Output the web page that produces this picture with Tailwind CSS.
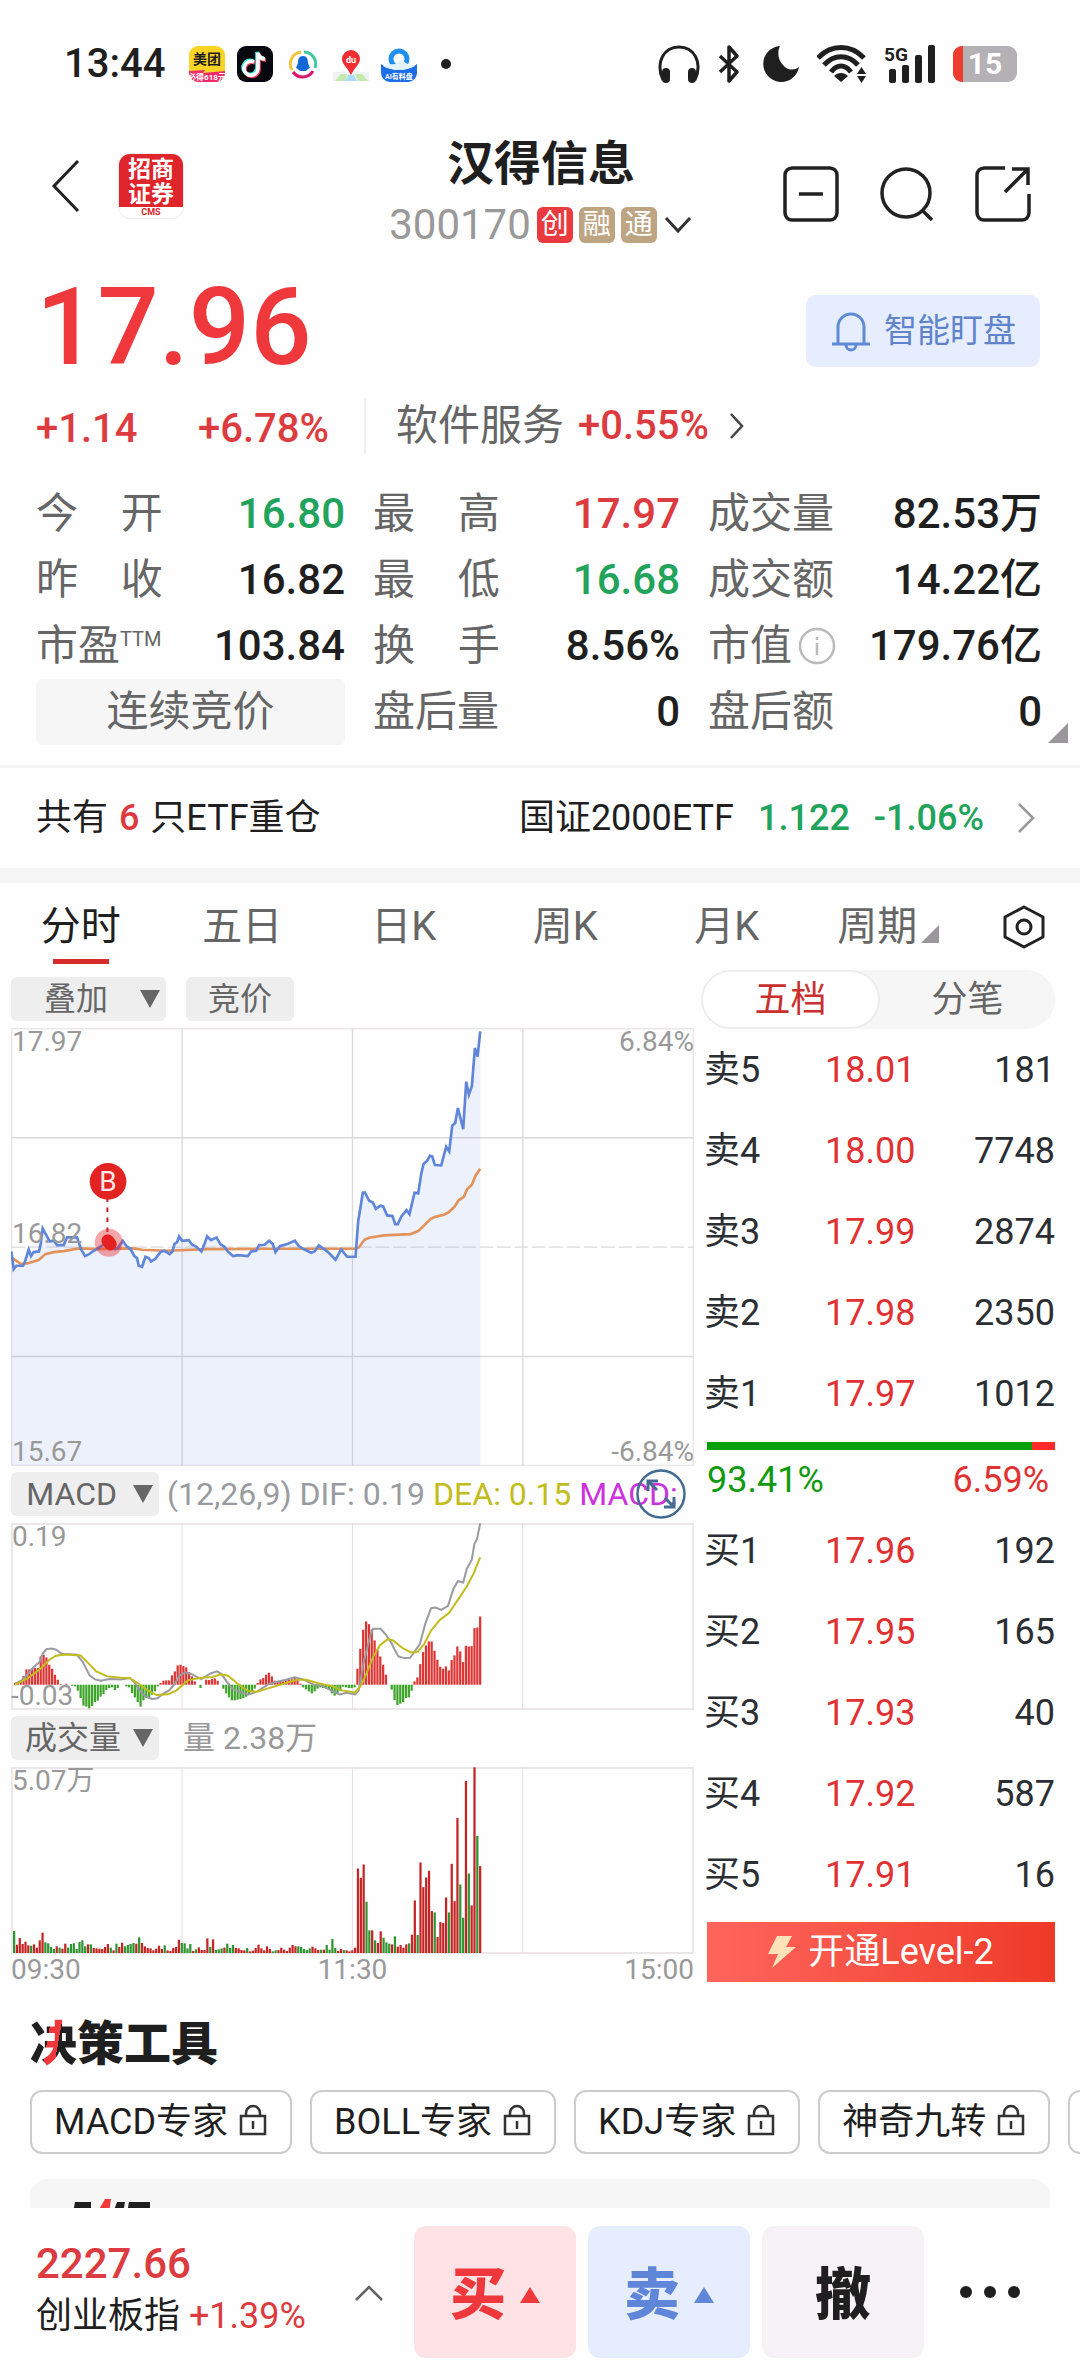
<!DOCTYPE html>
<html lang="zh-CN">
<head>
    <meta charset="UTF-8">
    <meta name="viewport" content="width=device-width, initial-scale=1.0">
    <title>汉得信息 300170</title>
    <script src="https://cdn.jsdelivr.net/npm/@tailwindcss/browser@4"></script>
    <style>
        body {
            font-family: Roboto, 'Noto Sans CJK SC', sans-serif;
        }
    </style>
</head>
<body class="bg-[#fefefe] text-[#1f1f1f]">
    <div class="flex h-screen flex-col overflow-hidden">
        <main class="min-h-0 flex-1 overflow-hidden">
            <!-- Status bar -->
            <div class="flex h-[128px] items-center justify-between pl-[64px] pr-[63px]">
                <div class="flex items-center gap-[12px]">
                    <span class="mr-[12px] text-[40px] font-medium leading-[44px]">13:44</span>
                    <svg class="size-[36px]" viewBox="0 0 36 36">
                        <rect width="36" height="36" rx="9" fill="#fbd324"/>
                        <path d="M0 25 L16 24 L14 27 L36 25 V27 A9 9 0 0 1 27 36 H9 A9 9 0 0 1 0 27Z" fill="#ee2c6c"/>
                        <text x="18" y="18" text-anchor="middle" font-size="14" font-weight="700" fill="#1f1f1f">美团</text>
                        <text x="18" y="34" text-anchor="middle" font-size="8" font-weight="700" fill="#fff">必得618元</text>
                    </svg>
                    <svg class="size-[36px]" viewBox="0 0 36 36">
                        <rect width="36" height="36" rx="9" fill="#06070f"/>
                        <g fill="none" stroke-width="3.6">
                            <path d="M18 15 a7 7 0 1 0 4 6 V6 c1 4 3 6 7 6" transform="translate(-2 0)" stroke="#37e6e0"/>
                            <path d="M18 15 a7 7 0 1 0 4 6 V6 c1 4 3 6 7 6" transform="translate(0 2)" stroke="#f0385c"/>
                            <path d="M18 15 a7 7 0 1 0 4 6 V6 c1 4 3 6 7 6" transform="translate(-1 1)" stroke="#fff"/>
                        </g>
                    </svg>
                    <svg class="size-[36px]" viewBox="0 0 36 36">
                        <g fill="none" stroke-width="3">
                            <path d="M7 24 A12 12 0 0 1 16 6" stroke="#f5c53c"/>
                            <path d="M19 6 A12 12 0 0 1 30 22" stroke="#3cc8a0"/>
                            <path d="M28 25 A12 12 0 0 1 8 26" stroke="#d8186c"/>
                        </g>
                        <path d="M18 10 c4 0 5 3 5 7 l2 5 -2 1 -2 2 h-6 l-2-2 -2-1 2-5 c0-4 1-7 5-7z" fill="#1568d8"/>
                    </svg>
                    <svg class="size-[36px]" viewBox="0 0 36 36">
                        <path d="M0 26 H36 V35 H0Z" fill="#eef3f2"/>
                        <path d="M2 35 L8 28 H14 L12 35Z M22 28 H29 L35 35 H25Z" fill="#c5e8ad"/>
                        <path d="M12 35 L15 29 H21 L24 35Z" fill="#a8dcf7"/>
                        <path d="M18 29 C14 21 9 18 9 13 A9 9 0 0 1 27 13 C27 18 22 21 18 29Z" fill="#ee2e33"/>
                        <text x="18" y="17" text-anchor="middle" font-size="9" font-weight="700" fill="#fff">du</text>
                    </svg>
                    <svg class="size-[36px]" viewBox="0 0 36 36">
                        <path d="M0 18 C10 26 26 26 36 18 V27 A9 9 0 0 1 27 36 H9 A9 9 0 0 1 0 27Z" fill="#1c6de8"/>
                        <circle cx="18" cy="13" r="8" fill="none" stroke="#218ff2" stroke-width="5"/>
                        <path d="M2 20 C10 16 15 21 19 14 C24 15 25 19 34 20 C25 25 10 25 2 20Z" fill="#e3f3ff"/>
                        <text x="18" y="33" text-anchor="middle" font-size="7" font-weight="700" fill="#fff">AI有料盘</text>
                    </svg>
                    <span class="ml-[12px] size-[10px] rounded-full bg-[#1f1f1f]"></span>
                </div>
                <div class="flex items-center gap-[17px]">
                    <svg class="h-[40px] w-[42px]" viewBox="0 0 42 40">
                        <path d="M5 36 C-3 18 6 3 21 3 C36 3 45 18 37 36" fill="none" stroke="#1f1f1f" stroke-width="3"/>
                        <rect x="4" y="24" width="8" height="15" rx="4" fill="#1f1f1f"/>
                        <rect x="30" y="24" width="8" height="15" rx="4" fill="#1f1f1f"/>
                    </svg>
                    <svg class="h-[40px] w-[24px]" viewBox="0 0 24 40">
                        <path d="M3 12 L20 28 L12 37 V3 L20 12 L3 28" fill="none" stroke="#1f1f1f" stroke-width="3.5" stroke-linejoin="round"/>
                    </svg>
                    <svg class="ml-[4px] h-[38px] w-[38px]" viewBox="0 0 38 38">
                        <path d="M18 1 A18 18 0 1 0 37 22 A11 11 0 0 1 21 20 C16 15 15 7 18 1Z" fill="#1f1f1f"/>
                    </svg>
                    <svg class="h-[38px] w-[50px]" viewBox="0 0 50 38">
                        <g fill="none" stroke="#1f1f1f" stroke-width="5">
                            <path d="M1 13 C14 -1 34 -1 47 13"/>
                            <path d="M7 20 C17 9 31 9 41 20"/>
                            <path d="M14 27 C20 19 28 19 34 27"/>
                        </g>
                        <path d="M17 31 C21 27 27 27 31 31 L24 37Z" fill="#1f1f1f"/>
                        <path d="M40 29 L44.500 22 L49 29Z M40 31 L44.500 38 L49 31Z" fill="#1f1f1f"/>
                    </svg>
                    <svg class="h-[44px] w-[52px] overflow-visible" viewBox="0 -4 52 44">
                        <text x="0" y="15" font-size="19" font-weight="700" fill="#1f1f1f">5G</text>
                        <g fill="#1f1f1f">
                            <rect x="5" y="23" width="7" height="14" rx="2"/>
                            <rect x="18" y="19" width="7" height="18" rx="2"/>
                            <rect x="31" y="9" width="7" height="28" rx="2"/>
                            <rect x="44" y="-1" width="7" height="38" rx="2"/>
                        </g>
                    </svg>
                    <div class="relative flex h-[36px] w-[64px] items-center justify-center overflow-hidden rounded-[9px] bg-[#b3b1b3] text-[30px] font-bold leading-[36px] text-white">
                        <span class="absolute inset-y-0 left-0 w-[10px] bg-[#ee3c2e]"></span>
                        15
                    </div>
                </div>
            </div>

            <!-- Header -->
            <header class="grid h-[132px] grid-cols-[1fr_auto_1fr] items-center pl-[50px] pr-[48px]">
                <div class="flex items-center gap-[36px] pb-[16px]">
                    <button type="button" aria-label="返回">
                        <svg class="h-[54px] w-[32px]" viewBox="0 0 32 54"><path d="M28 2 L4 27 L28 52" fill="none" stroke="#222" stroke-width="3"/></svg>
                    </button>
                    <div class="flex h-[66px] w-[66px] flex-col overflow-hidden rounded-[12px] border border-[#eee] bg-white text-center">
                        <span class="bg-[#e0242b] pt-[3px] text-[23px] font-bold leading-[25px] text-white">招商<br>证券</span>
                        <span class="text-[9px] font-bold leading-[11px] text-[#d8232a]">CMS</span>
                    </div>
                </div>
                <div class="flex flex-col items-center">
                    <h1 class="text-[47px] font-bold leading-[62px]">汉得信息</h1>
                    <div class="flex items-center gap-[6px]">
                        <span class="text-[42px] leading-[60px] text-[#999]">300170</span>
                        <span class="size-[36px] rounded-[6px] bg-[#e83a3f] text-center text-[28px] leading-[36px] text-white">创</span>
                        <span class="size-[36px] rounded-[6px] bg-[#bda583] text-center text-[28px] leading-[36px] text-white">融</span>
                        <span class="size-[36px] rounded-[6px] bg-[#bda583] text-center text-[28px] leading-[36px] text-white">通</span>
                        <svg class="h-[18px] w-[30px]" viewBox="0 0 30 18"><path d="M3 2 L15 15 L27 2" fill="none" stroke="#333" stroke-width="3"/></svg>
                    </div>
                </div>
                <div class="flex items-center justify-end gap-[38px]">
                    <button type="button" aria-label="删自选">
                        <svg class="size-[58px]" viewBox="0 0 58 58">
                            <rect x="3" y="3" width="52" height="52" rx="7" fill="none" stroke="#222" stroke-width="3.500"/>
                            <path d="M17 29 H41" stroke="#222" stroke-width="3.500"/>
                        </svg>
                    </button>
                    <button type="button" aria-label="搜索">
                        <svg class="size-[58px]" viewBox="0 0 58 58">
                            <circle cx="28" cy="28" r="24" fill="none" stroke="#222" stroke-width="3.500"/>
                            <path d="M44 45 L54 55" stroke="#222" stroke-width="3.500"/>
                        </svg>
                    </button>
                    <button type="button" aria-label="分享">
                        <svg class="size-[58px]" viewBox="0 0 58 58">
                            <path d="M31 3 H10 A7 7 0 0 0 3 10 V48 A7 7 0 0 0 10 55 H48 A7 7 0 0 0 55 48 V29 M31 27 L54 4 M38 4 H54 V20" fill="none" stroke="#222" stroke-width="3.500"/>
                        </svg>
                    </button>
                </div>
            </header>

            <!-- Price -->
            <section>
                <div class="flex h-[134px] items-center justify-between pl-[36px] pr-[40px]">
                    <span class="text-[108px] font-medium leading-[120px] text-[#ef383c]">17.96</span>
                    <button type="button" class="mt-[8px] flex h-[72px] items-center gap-[12px] rounded-[10px] bg-[#e6edff] px-[24px] text-[33px] text-[#5f84cc]">
                        <svg class="h-[42px] w-[42px]" viewBox="0 0 42 42">
                            <path d="M8 34 V17 A13 13 0 0 1 34 17 V34 M2 34 H40 M16 35 A5 5 0 0 0 26 35" fill="none" stroke="#5f8ad6" stroke-width="3"/>
                        </svg>
                        智能盯盘
                    </button>
                </div>
                <div class="flex h-[64px] items-center px-[36px] text-[40px] font-medium leading-[56px] text-[#dc3b40]">
                    <span class="w-[162px] pt-[6px]">+1.14</span>
                    <span class="w-[166px] pt-[6px]">+6.78%</span>
                    <a href="#" class="flex items-center border-l-2 border-[#f2f2f2] pl-[30px]">
                        <span class="mr-[14px] text-[42px] font-normal text-[#666]">软件服务</span>
                        <span>+0.55%</span>
                        <svg class="ml-[20px] h-[28px] w-[16px]" viewBox="0 0 16 28"><path d="M2 2 L13 14 L2 26" fill="none" stroke="#444" stroke-width="2.500"/></svg>
                    </a>
                </div>
            </section>

            <!-- Quote details -->
            <section class="relative mt-[23px] grid grid-cols-[309fr_307fr_334fr] gap-x-[28px] pl-[36px] pr-[38px] text-[42px] leading-[66px]">
                <div class="flex justify-between"><span class="text-[#666]">今&emsp;开</span><span class="font-medium text-[#21a35c]">16.80</span></div>
                <div class="flex justify-between"><span class="text-[#666]">最&emsp;高</span><span class="font-medium text-[#dc3b40]">17.97</span></div>
                <div class="flex justify-between"><span class="text-[#666]">成交量</span><span class="font-medium">82.53万</span></div>
                <div class="flex justify-between"><span class="text-[#666]">昨&emsp;收</span><span class="font-medium">16.82</span></div>
                <div class="flex justify-between"><span class="text-[#666]">最&emsp;低</span><span class="font-medium text-[#21a35c]">16.68</span></div>
                <div class="flex justify-between"><span class="text-[#666]">成交额</span><span class="font-medium">14.22亿</span></div>
                <div class="flex justify-between"><span class="flex text-[#666]">市盈<span class="text-[20px] leading-[52px]">TTM</span></span><span class="font-medium">103.84</span></div>
                <div class="flex justify-between"><span class="text-[#666]">换&emsp;手</span><span class="font-medium">8.56%</span></div>
                <div class="flex justify-between">
                    <span class="flex items-center gap-[6px] text-[#666]">市值
                        <svg class="size-[38px]" viewBox="0 0 38 38">
                            <circle cx="19" cy="19" r="17" fill="none" stroke="#bbb" stroke-width="2.500"/>
                            <path d="M19 16 V28 M19 10 V13" stroke="#bbb" stroke-width="2.500"/>
                        </svg>
                    </span>
                    <span class="font-medium">179.76亿</span>
                </div>
                <div class="rounded-[6px] bg-[#f6f6f6] text-center text-[#666]">连续竞价</div>
                <div class="flex justify-between"><span class="text-[#666]">盘后量</span><span class="font-medium">0</span></div>
                <div class="flex justify-between"><span class="text-[#666]">盘后额</span><span class="font-medium">0</span></div>
                <svg class="absolute bottom-[2px] right-[12px] size-[20px]" viewBox="0 0 20 20"><path d="M20 0 V20 H0Z" fill="#9a979b"/></svg>
            </section>

            <!-- ETF -->
            <a href="#" class="mt-[20px] flex h-[118px] items-center border-b-[15px] border-t-[3px] border-[#f6f6f6] pl-[36px] pr-[44px] text-[36px]">
                <span>共有 <span class="mx-[2px] font-medium text-[#dc3b40]">6</span> 只ETF重仓</span>
                <span class="ml-auto">国证2000ETF</span>
                <span class="ml-[24px] font-medium text-[#21a35c]">1.122</span>
                <span class="ml-[24px] font-medium text-[#21a35c]">-1.06%</span>
                <svg class="ml-[32px] h-[32px] w-[20px]" viewBox="0 0 20 32"><path d="M3 2 L17 16 L3 30" fill="none" stroke="#999" stroke-width="2.500"/></svg>
            </a>

            <!-- Period tabs -->
            <nav class="flex h-[87px] items-center pr-[33px] text-[40px] leading-[56px] text-[#666]">
                <a href="#" class="relative flex-1 text-center text-[#1f1f1f]">分时<span class="absolute -bottom-[9px] left-1/2 h-[5px] w-[56px] -translate-x-1/2 bg-[#d62b2b]"></span></a>
                <a href="#" class="flex-1 text-center">五日</a>
                <a href="#" class="flex-1 text-center">日K</a>
                <a href="#" class="flex-1 text-center">周K</a>
                <a href="#" class="flex-1 text-center">月K</a>
                <a href="#" class="flex flex-1 items-center justify-center gap-[4px]">周期<svg class="mt-[14px] size-[18px]" viewBox="0 0 18 18"><path d="M18 0 V18 H0Z" fill="#9a979b"/></svg></a>
                <button type="button" aria-label="设置" class="ml-[32px]">
                    <svg class="size-[46px]" viewBox="0 0 46 46">
                        <path d="M23 3 L42 13 V33 L23 43 L4 33 V13Z" fill="none" stroke="#222" stroke-width="3" stroke-linejoin="round"/>
                        <circle cx="23" cy="23" r="7" fill="none" stroke="#222" stroke-width="3"/>
                    </svg>
                </button>
            </nav>

            <section class="flex">
                <!-- Charts -->
                <div class="min-w-0 flex-1 pl-[11px] pt-[7px] text-[32px] leading-[44px]">
                    <div class="flex gap-[20px] text-[#666]">
                        <button type="button" class="flex h-[44px] w-[155px] items-center justify-end gap-[32px] rounded-[6px] bg-[#eee] pr-[6px]">叠加
                            <svg class="h-[18px] w-[20px]" viewBox="0 0 20 18"><path d="M0 0 H20 L10 18Z" fill="#666"/></svg>
                        </button>
                        <button type="button" class="h-[44px] rounded-[6px] bg-[#eee] px-[22px]">竞价</button>
                    </div>

                    <div class="relative mt-[7px] text-[28px] leading-[28px] text-[#999]">
                        <svg class="block w-full" viewBox="32 52 2048 1314">
                            <g fill="none" stroke="#dcdadc" stroke-width="4">
                                <rect x="34" y="54" width="2044" height="1310" stroke="#ebe7e9" stroke-width="5"/>
                                <path d="M545 54 V1364 M1056 54 V1364 M1567 54 V1364 M34 381 H2078 M34 1037 H2078"/>
                                <path d="M34 709 H2078" stroke-dasharray="40 12"/>
                            </g>
                            <polygon id="price-area" fill="#6488f0" fill-opacity="0.11"/>
                            <polyline id="avg-line" fill="none" stroke="#e1935b" stroke-width="8"/>
                            <polyline id="price-line" fill="none" stroke="#5f86d8" stroke-width="8"/>
                            <!-- Buy marker -->
                            <path d="M321 560 V670" stroke="#c2242a" stroke-width="6" stroke-dasharray="14 16"/>
                            <circle cx="325" cy="696" r="42" fill="#e8242a" fill-opacity="0.4"/>
                            <path d="M322 690 L330 700" stroke="#e52020" stroke-width="38" stroke-linecap="round"/>
                            <circle cx="323" cy="512" r="55" fill="#e32222"/>
                            <text x="323" y="542" text-anchor="middle" font-size="84" fill="#ffe8e8">B</text>
                        </svg>
                        <span class="absolute left-[1px] top-0">17.97</span>
                        <span class="absolute right-0 top-0">6.84%</span>
                        <span class="absolute left-[1px] top-[192px]">16.82</span>
                        <span class="absolute bottom-0 left-[1px]">15.67</span>
                        <span class="absolute bottom-0 right-0">-6.84%</span>
                    </div>

                    <div class="relative mt-[6px] flex items-center gap-[8px] whitespace-nowrap text-[#999ba0]">
                        <button type="button" class="flex h-[44px] w-[148px] items-center justify-end gap-[16px] rounded-[6px] bg-[#eee] pr-[6px] text-[#666]">MACD
                            <svg class="h-[18px] w-[20px]" viewBox="0 0 20 18"><path d="M0 0 H20 L10 18Z" fill="#666"/></svg>
                        </button>
                        <span>(12,26,9)</span>
                        <span>DIF: 0.19</span>
                        <span class="text-[#c2bc1c]">DEA: 0.15</span>
                        <span class="text-[#cc33dd]">MACD:</span>
                        <button type="button" aria-label="全屏" class="absolute right-[8px] -top-[3px] size-[50px]">
                            <svg class="size-[50px]" viewBox="0 0 50 50">
                                <circle cx="25" cy="25" r="23.500" fill="none" stroke="#446c92" stroke-width="2.500"/>
                                <path d="M21 21 L12 12 M12 22 V12 H22 M29 29 L38 38 M38 28 V38 H28" fill="none" stroke="#446c92" stroke-width="3"/>
                            </svg>
                        </button>
                    </div>

                    <div class="relative mt-[7px] text-[28px] leading-[28px] text-[#999]">
                        <svg class="block h-[187px] w-full" viewBox="24 187 1530 562" preserveAspectRatio="none">
                            <g fill="none" stroke="#ebe7e9" stroke-width="2">
                                <rect x="26" y="190" width="1526" height="556" vector-effect="non-scaling-stroke"/>
                                <path d="M407 188 V746 M789 188 V746 M1170 188 V746" stroke="#dcdadc"/>
                            </g>
                            <g id="macd-bars"></g>
                            <polyline id="dif-line" fill="none" stroke="#999ba0" stroke-width="2" vector-effect="non-scaling-stroke"/>
                            <polyline id="dea-line" fill="none" stroke="#c2bc1c" stroke-width="2" vector-effect="non-scaling-stroke"/>
                        </svg>
                        <span class="absolute left-[1px] top-0">0.19</span>
                        <span class="absolute bottom-0 left-0">-0.03</span>
                    </div>

                    <div class="mt-[6px] flex items-center gap-[24px] text-[#999]">
                        <button type="button" class="flex h-[44px] w-[148px] items-center justify-end gap-[12px] rounded-[6px] bg-[#eee] pr-[6px] text-[#666]">成交量
                            <svg class="h-[18px] w-[20px]" viewBox="0 0 20 18"><path d="M0 0 H20 L10 18Z" fill="#666"/></svg>
                        </button>
                        <span>量 2.38万</span>
                    </div>

                    <div class="relative mt-[7px] text-[28px] leading-[28px] text-[#999]">
                        <svg class="block h-[187px] w-full" viewBox="24 139 1530 562" preserveAspectRatio="none">
                            <g fill="none" stroke="#ebe7e9" stroke-width="2">
                                <rect x="26" y="142" width="1526" height="556" vector-effect="non-scaling-stroke"/>
                                <path d="M407 140 V698 M789 140 V698 M1170 140 V698" stroke="#dcdadc"/>
                            </g>
                            <g id="volume-bars"></g>
                        </svg>
                        <span class="absolute left-[1px] top-0">5.07万</span>
                    </div>
                    <div class="grid grid-cols-3 text-[28px] leading-[32px] text-[#999]">
                        <span>09:30</span>
                        <span class="text-center">11:30</span>
                        <span class="text-right">15:00</span>
                    </div>
                </div>

                <!-- Order book -->
                <div class="w-[386px] shrink-0 pl-[7px] pr-[25px] text-[36px] text-[#2b2f33]">
                    <div class="flex h-[59px] rounded-full bg-[#f6f6f6] text-[#666]">
                        <button type="button" class="flex-1 rounded-full border-2 border-[#efecec] bg-white text-[#c9302f]">五档</button>
                        <button type="button" class="flex-1">分笔</button>
                    </div>
                    <table class="w-full">
                        <tbody>
                            <tr class="h-[81px]"><th class="w-[124px] pl-[3px] text-left font-normal">卖5</th><td class="text-[#e03232]">18.01</td><td class="text-right">181</td></tr>
                            <tr class="h-[81px]"><th class="pl-[3px] text-left font-normal">卖4</th><td class="text-[#e03232]">18.00</td><td class="text-right">7748</td></tr>
                            <tr class="h-[81px]"><th class="pl-[3px] text-left font-normal">卖3</th><td class="text-[#e03232]">17.99</td><td class="text-right">2874</td></tr>
                            <tr class="h-[81px]"><th class="pl-[3px] text-left font-normal">卖2</th><td class="text-[#e03232]">17.98</td><td class="text-right">2350</td></tr>
                            <tr class="h-[81px]"><th class="pl-[3px] text-left font-normal">卖1</th><td class="text-[#e03232]">17.97</td><td class="text-right">1012</td></tr>
                        </tbody>
                    </table>
                    <div class="ml-[6px] mt-[8px] flex h-[8px] bg-[#ff2b2b]">
                        <div class="bg-[#06a006]" style="width: 93.41%"></div>
                    </div>
                    <div class="flex justify-between pl-[6px] pr-[6px] leading-[60px]">
                        <span class="text-[#109a10]">93.41%</span>
                        <span class="text-[#e03232]">6.59%</span>
                    </div>
                    <table class="w-full">
                        <tbody>
                            <tr class="h-[81px]"><th class="w-[124px] pl-[3px] text-left font-normal">买1</th><td class="text-[#e03232]">17.96</td><td class="text-right">192</td></tr>
                            <tr class="h-[81px]"><th class="pl-[3px] text-left font-normal">买2</th><td class="text-[#e03232]">17.95</td><td class="text-right">165</td></tr>
                            <tr class="h-[81px]"><th class="pl-[3px] text-left font-normal">买3</th><td class="text-[#e03232]">17.93</td><td class="text-right">40</td></tr>
                            <tr class="h-[81px]"><th class="pl-[3px] text-left font-normal">买4</th><td class="text-[#e03232]">17.92</td><td class="text-right">587</td></tr>
                            <tr class="h-[81px]"><th class="pl-[3px] text-left font-normal">买5</th><td class="text-[#e03232]">17.91</td><td class="text-right">16</td></tr>
                        </tbody>
                    </table>
                    <div class="pl-[6px] pt-[7px]">
                        <button type="button" class="flex h-[60px] w-full items-center justify-center gap-[12px] bg-gradient-to-r from-[#ff655b] to-[#ee3928] text-white">
                            <svg class="h-[34px] w-[28px]" viewBox="0 0 28 34"><path d="M9 1 H24 L18 12 H28 L4 33 L10 19 H0Z" fill="#ffe2b8"/></svg>
                            开通Level-2
                        </button>
                    </div>
                </div>
            </section>

            <!-- Decision tools -->
            <section class="pl-[30px]">
                <h2 class="mt-[24px] text-[47px] font-black leading-[68px]"><span class="bg-[linear-gradient(100deg,#1f1f1f_38%,#ef383c_38%,#ef383c_58%,#1f1f1f_58%)] bg-clip-text text-transparent">决</span>策工具</h2>
                <div class="mt-[12px] flex gap-[18px] overflow-hidden whitespace-nowrap text-[36px] leading-[60px]">
                    <button type="button" class="flex shrink-0 items-center gap-[10px] rounded-[12px] border-2 border-[#ccc] px-[22px]">MACD专家
                        <svg class="mb-[4px] h-[32px] w-[30px]" viewBox="0 0 30 32"><path d="M3 12 H27 V30 H3Z M8 12 V9 A7 7 0 0 1 22 9 V12 M15 17 V25" fill="none" stroke="#333" stroke-width="2.500"/></svg>
                    </button>
                    <button type="button" class="flex shrink-0 items-center gap-[10px] rounded-[12px] border-2 border-[#ccc] px-[22px]">BOLL专家
                        <svg class="mb-[4px] h-[32px] w-[30px]" viewBox="0 0 30 32"><path d="M3 12 H27 V30 H3Z M8 12 V9 A7 7 0 0 1 22 9 V12 M15 17 V25" fill="none" stroke="#333" stroke-width="2.500"/></svg>
                    </button>
                    <button type="button" class="flex shrink-0 items-center gap-[10px] rounded-[12px] border-2 border-[#ccc] px-[22px]">KDJ专家
                        <svg class="mb-[4px] h-[32px] w-[30px]" viewBox="0 0 30 32"><path d="M3 12 H27 V30 H3Z M8 12 V9 A7 7 0 0 1 22 9 V12 M15 17 V25" fill="none" stroke="#333" stroke-width="2.500"/></svg>
                    </button>
                    <button type="button" class="flex shrink-0 items-center gap-[10px] rounded-[12px] border-2 border-[#ccc] px-[22px]">神奇九转
                        <svg class="mb-[4px] h-[32px] w-[30px]" viewBox="0 0 30 32"><path d="M3 12 H27 V30 H3Z M8 12 V9 A7 7 0 0 1 22 9 V12 M15 17 V25" fill="none" stroke="#333" stroke-width="2.500"/></svg>
                    </button>
                    <button type="button" aria-label="更多工具" class="w-[200px] shrink-0 rounded-[12px] border-2 border-[#ccc]"></button>
                </div>
                <div class="mr-[30px] mt-[25px] h-[120px] rounded-[18px] bg-[#f6f6f6] pl-[43px] pt-[20px]">
                    <svg class="h-[48px] w-[80px]" viewBox="0 0 80 48">
                        <path d="M2 3 H18 V14 H0Z M44 3 H52 L50 14 H40Z M56 3 H77 V14 H54Z" fill="#1f1f1f"/>
                        <path d="M32 0 H38 L36 14 H24Z" fill="#ef383c"/>
                    </svg>
                </div>
            </section>
        </main>

        <!-- Trade bar -->
        <footer class="flex h-[168px] shrink-0 items-start bg-[#fefefe] pl-[36px] pr-[60px] pt-[18px]">
            <div class="flex min-w-0 flex-1 items-center justify-between pr-[30px]">
                <div>
                    <div class="pt-[12px] text-[42px] font-medium leading-[52px] text-[#dc3b40]">2227.66</div>
                    <div class="whitespace-nowrap text-[36px] leading-[52px]">创业板指 <span class="text-[#dc3b40]">+1.39%</span></div>
                </div>
                <svg class="mt-[18px] h-[18px] w-[30px]" viewBox="0 0 30 18"><path d="M2 16 L15 3 L28 16" fill="none" stroke="#666" stroke-width="2.500"/></svg>
            </div>
            <div class="flex gap-[12px] text-[56px] font-black">
                <button type="button" class="flex h-[132px] w-[162px] items-center justify-center gap-[14px] rounded-[12px] bg-[#ffe2e5] pt-[6px] text-[#ef383c]">买
                    <svg class="size-[20px]" viewBox="0 0 20 20"><path d="M10 2 L20 18 H0Z" fill="#ef383c"/></svg>
                </button>
                <button type="button" class="flex h-[132px] w-[162px] items-center justify-center gap-[14px] rounded-[12px] bg-[#e6edff] pt-[6px] text-[#5f86d8]">卖
                    <svg class="size-[20px]" viewBox="0 0 20 20"><path d="M10 2 L20 18 H0Z" fill="#5f86d8"/></svg>
                </button>
                <button type="button" class="h-[132px] w-[162px] rounded-[12px] bg-[#f7f2f6] pt-[6px]">撤</button>
            </div>
            <button type="button" aria-label="更多" class="ml-[36px] flex h-[132px] items-center gap-[12px]">
                <span class="size-[12px] rounded-full bg-[#1f1f1f]"></span>
                <span class="size-[12px] rounded-full bg-[#1f1f1f]"></span>
                <span class="size-[12px] rounded-full bg-[#1f1f1f]"></span>
            </button>
        </footer>
    </div>

    <script>
        // Intraday price and average price
        const price = '33,722 40,775 48,765 68,765 74,752 85,716 92,736 100,724 116,722 121,700 127,653 148,692 160,690 170,703 190,703 200,680 230,680 242,715 254,736 266,730 280,720 300,708 325,690 345,715 352,712 367,690 378,706 390,714 402,736 410,742 415,765 425,768 435,738 445,742 452,752 465,744 480,724 492,720 508,730 516,722 522,700 530,694 536,677 545,690 565,688 575,702 585,706 603,722 612,700 620,677 632,688 648,680 660,700 672,708 682,722 698,736 712,733 742,736 752,722 767,720 776,703 792,702 806,690 817,700 825,724 838,706 860,700 883,690 895,706 908,714 932,726 942,722 955,704 972,716 985,726 1005,747 1022,716 1040,738 1065,738 1073,632 1087,546 1093,545 1106,570 1117,575 1126,594 1140,585 1148,587 1160,614 1176,616 1184,640 1192,640 1202,618 1218,598 1227,610 1242,546 1253,548 1262,490 1269,460 1280,450 1288,435 1295,437 1303,463 1322,464 1337,408 1346,422 1355,345 1364,337 1372,292 1388,355 1397,213 1405,252 1414,226 1423,112 1431,138 1439,62';
        const average = '33,740 45,748 62,760 80,758 115,748 135,730 160,724 190,721 235,713 290,715 400,713 425,717 500,720 620,715 800,714 1000,714 1065,714 1075,710 1092,687 1106,681 1150,674 1230,670 1253,661 1290,625 1302,619 1330,612 1345,604 1362,588 1375,568 1390,558 1400,535 1414,522 1425,495 1439,474';
        document.getElementById('price-line').setAttribute('points', price);
        document.getElementById('avg-line').setAttribute('points', average);
        document.getElementById('price-area').setAttribute('points', price + ' 1439,1364 33,1364');

        // MACD lines
        document.getElementById('dif-line').setAttribute('points', '33,670 48,660 62,640 75,620 88,605 95,580 103,566 115,564 125,568 138,580 172,583 185,605 200,645 212,657 225,661 245,656 270,657 290,653 300,665 312,690 325,708 340,716 352,714 365,700 378,690 390,672 402,645 415,636 430,642 450,656 470,640 485,633 495,640 508,665 520,685 535,694 555,703 575,694 600,672 620,664 640,658 660,651 680,658 700,672 720,676 745,692 760,702 775,697 795,702 803,690 815,600 830,520 835,505 852,505 865,525 875,545 885,572 892,588 905,593 918,592 925,580 940,550 952,490 965,443 975,441 988,448 1003,436 1015,385 1025,362 1037,366 1045,325 1056,298 1062,250 1068,235 1075,188');
        document.getElementById('dea-line').setAttribute('points', '33,673 60,655 90,625 110,598 125,586 145,582 180,585 195,605 215,633 240,648 270,652 290,653 310,670 330,690 350,704 375,702 395,690 420,660 450,652 475,650 495,642 510,646 530,668 555,692 575,694 600,684 640,668 665,658 685,658 710,668 745,678 765,690 795,696 808,675 820,640 835,590 850,555 868,536 880,540 900,562 920,576 935,574 950,550 965,510 985,478 1005,458 1025,418 1045,378 1060,340 1075,290');

        const macd = [5,8,12,26,46,46,50,50,50,85,90,82,60,48,30,15,2,0,3,0,-3,-5,-18,-40,-63,-66,-71,-64,-52,-48,-36,-28,-16,-10,-8,-16,-10,0,0,-5,-8,-25,-38,-52,-66,-47,-40,-42,-30,-20,-5,5,12,13,13,28,40,58,60,56,52,38,25,10,0,-10,0,15,14,17,19,12,0,-12,-26,-38,-47,-47,-45,-43,-40,-36,-28,-20,-12,5,16,20,30,36,25,12,10,11,10,13,14,16,20,16,3,-8,-14,-20,-26,-20,-12,-8,-10,-12,-16,-26,-33,-28,-18,-6,-8,-10,-10,-8,48,108,165,190,182,166,133,105,85,60,30,0,-15,-46,-61,-57,-52,-40,-38,-18,10,22,62,98,118,130,130,102,75,54,48,55,43,74,88,115,100,68,117,115,116,170,172,205];
        // Negative volume = price went down in that minute
        const volume = [-66,25,45,27,34,23,-22,26,16,38,61,-32,-29,-18,-12,20,-16,13,28,-16,-27,-29,-12,-33,-38,-20,26,-26,15,14,13,12,18,27,-16,8,-28,18,31,-20,-24,-27,-30,28,-47,30,20,15,14,8,13,22,12,-23,8,6,15,18,40,-30,-29,-14,-27,6,-11,17,9,9,44,-18,41,-9,-11,-14,16,-28,-15,-24,15,14,9,8,-15,5,7,15,25,14,8,20,12,-5,-8,9,16,10,6,16,24,20,-20,-18,-12,-9,-14,19,14,9,-10,10,-24,-10,-42,-15,6,12,-9,8,5,8,16,254,226,266,-154,-68,68,-38,30,65,-46,-32,-28,26,-50,19,24,16,26,-29,55,158,-54,272,198,227,247,126,-122,48,93,90,167,-122,268,156,406,-206,-106,517,-239,143,558,-352,261];

        function drawBars(id, values, base, start, below, red, green) {
            const step = (1075 - start) / (values.length - 1);
            document.getElementById(id).innerHTML = values.map((v, i) => {
                const h = Math.abs(v);
                const y = below && v < 0 ? base : base - h;
                return `<rect x="${start + i * step - 2.5}" y="${y}" width="5" height="${h}" fill="${v < 0 ? green : red}"/>`;
            }).join('');
        }
        drawBars('macd-bars', macd, 673, 33, true, '#dd3434', '#3fa52a');
        drawBars('volume-bars', volume, 698, 31, false, '#c42424', '#2f9432');
    </script>
</body>
</html>
